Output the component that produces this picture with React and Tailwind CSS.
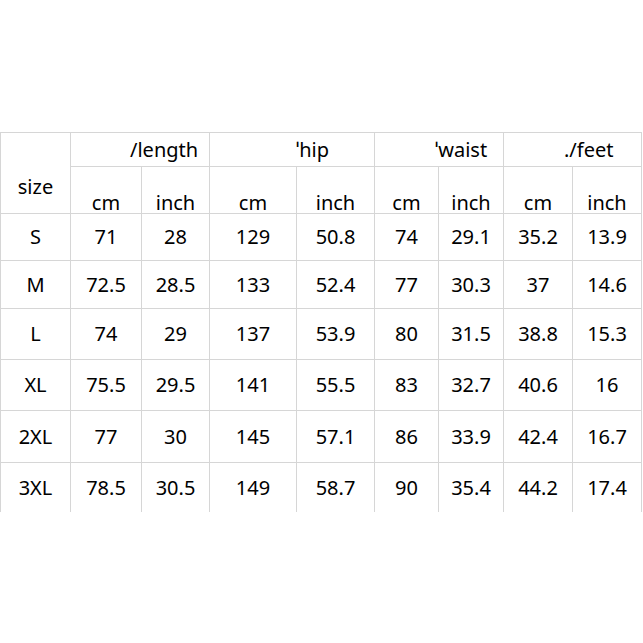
import React from 'react';

const rows = [
    ['S', '71', '28', '129', '50.8', '74', '29.1', '35.2', '13.9'],
    ['M', '72.5', '28.5', '133', '52.4', '77', '30.3', '37', '14.6'],
    ['L', '74', '29', '137', '53.9', '80', '31.5', '38.8', '15.3'],
    ['XL', '75.5', '29.5', '141', '55.5', '83', '32.7', '40.6', '16'],
    ['2XL', '77', '30', '145', '57.1', '86', '33.9', '42.4', '16.7'],
    ['3XL', '78.5', '30.5', '149', '58.7', '90', '35.4', '44.2', '17.4'],
];

// row heights taken from the line positions in the picture
const rowHeights = ['h-[47px]', 'h-[48px]', 'h-[51px]', 'h-[51px]', 'h-[52px]', 'h-[49px]'];

const groups = [
    { label: '/length', pad: 'pl-[59px]' },
    { label: '\u02c8hip', pad: 'pl-[86px]' },
    { label: '\u02c8waist', pad: 'pl-[60px]' },
    { label: './feet', pad: 'pl-[60px]' },
];

const App = () => {
    return (
        <div className="w-[643px] h-[643px] bg-white text-black overflow-hidden" style={{ fontFamily: '"Noto Sans", "Open Sans", sans-serif' }}>
            <div className="mt-[132px] w-[642px] grid grid-cols-[70px_71px_68px_87px_78px_64px_65px_69px_69px] border-t border-l border-[#d6d6d6] text-[20px] leading-[20px]">
                <div className="row-span-2 border-r border-b border-[#d6d6d6] flex items-end justify-center pb-[16px]">size</div>
                {groups.map(g => (
                    <div key={g.label} className={'col-span-2 h-[34px] border-r border-b border-[#d6d6d6] flex items-center ' + g.pad}>
                        {g.label}
                    </div>
                ))}
                {groups.map(g => (
                    <React.Fragment key={g.label + 'u'}>
                        <div className="h-[47px] border-r border-b border-[#d6d6d6] flex items-end justify-center">cm</div>
                        <div className="h-[47px] border-r border-b border-[#d6d6d6] flex items-end justify-center">inch</div>
                    </React.Fragment>
                ))}
                {rows.map((r, i) => r.map((v, j) => (
                    <div
                        key={i + '-' + j}
                        className={rowHeights[i] + ' border-r border-[#d6d6d6] flex items-center justify-center ' + (i < rows.length - 1 ? 'border-b' : '')}
                    >
                        {v}
                    </div>
                )))}
            </div>
        </div>
    );
};

export default App;
